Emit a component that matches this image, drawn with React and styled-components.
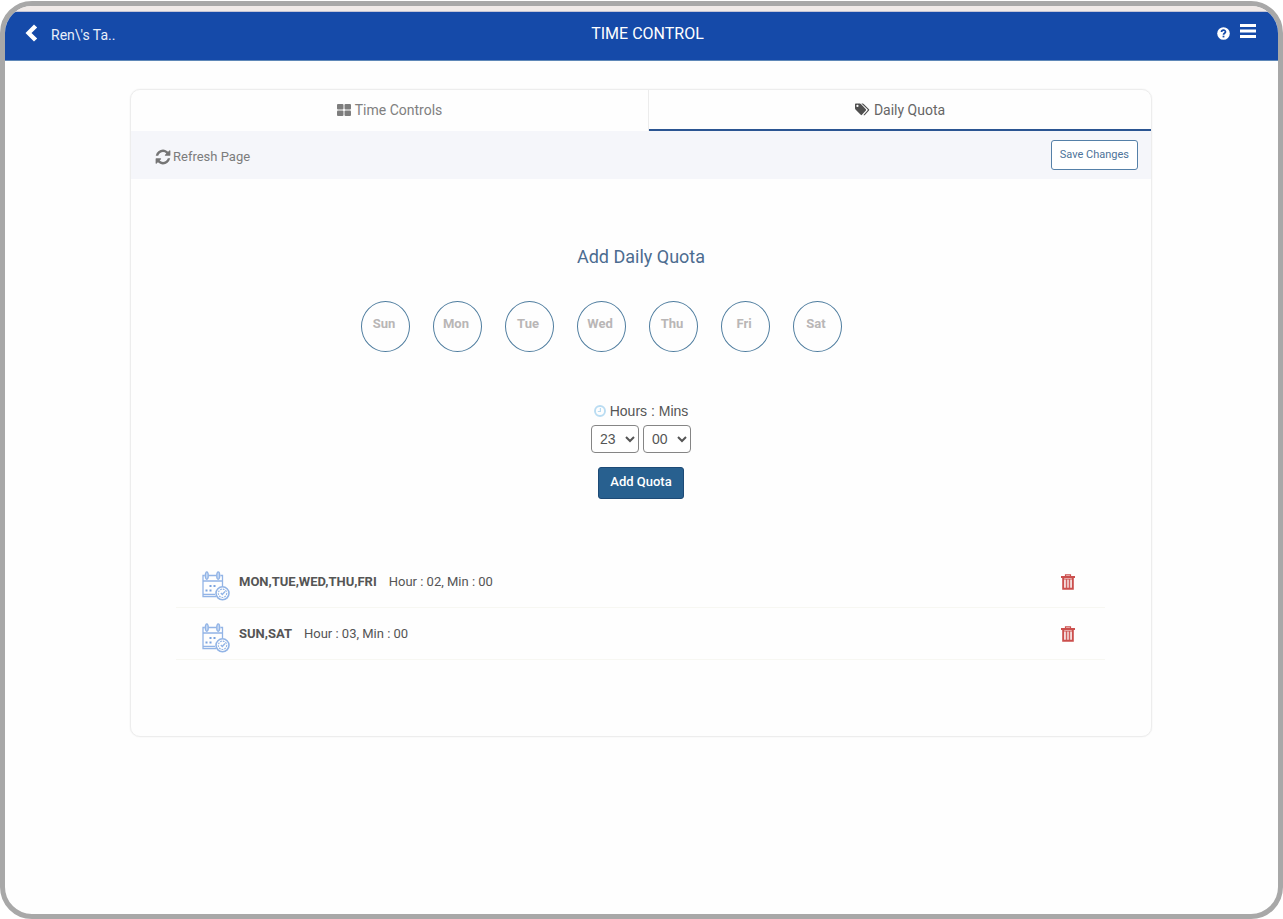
import styled, { createGlobalStyle } from "styled-components";

const days = ["Sun", "Mon", "Tue", "Wed", "Thu", "Fri", "Sat"];

const quotas = [
  { days: "MON,TUE,WED,THU,FRI", hour: "02", min: "00" },
  { days: "SUN,SAT", hour: "03", min: "00" },
];

const pad = (n) => String(n).padStart(2, "0");
const hours = Array.from({ length: 24 }, (_, i) => pad(i));
const minutes = Array.from({ length: 12 }, (_, i) => pad(i * 5));

function BackIcon() {
  return (
    <svg width="13" height="18" viewBox="0 0 13 18" aria-hidden="true">
      <path d="M9 0.500L12.200 3.400L6.500 9L12.200 14.600L9 17.500L0.500 9Z" fill="currentColor" />
    </svg>
  );
}

function HelpIcon() {
  return (
    <svg width="13" height="13" viewBox="0 0 13 13" aria-hidden="true">
      <circle cx="6.500" cy="6.500" r="6.300" fill="#fff" />
      <path
        d="M4.500 5C4.500 2.500 8.600 2.600 8.500 4.900C8.400 6.300 6.500 6.200 6.500 7.800"
        fill="none"
        stroke="#154aa9"
        strokeWidth="1.700"
      />
      <rect x="5.600" y="8.700" width="1.800" height="1.700" fill="#154aa9" />
    </svg>
  );
}

function MenuIcon() {
  return (
    <svg width="16" height="14" viewBox="0 0 16 14" aria-hidden="true">
      <path d="M0 0H16V3H0ZM0 5.500H16V8.500H0ZM0 11H16V14H0Z" fill="currentColor" />
    </svg>
  );
}

function GridIcon() {
  return (
    <svg width="14" height="12" viewBox="0 0 14 12" aria-hidden="true">
      <g fill="#7d7d7d">
        <rect width="6.500" height="5.500" rx="1" />
        <rect x="7.500" width="6.500" height="5.500" rx="1" />
        <rect y="6.500" width="6.500" height="5.500" rx="1" />
        <rect x="7.500" y="6.500" width="6.500" height="5.500" rx="1" />
      </g>
    </svg>
  );
}

function TagsIcon() {
  return (
    <svg width="15" height="13" viewBox="0 0 16 13" aria-hidden="true">
      <path
        d="M0.800 0H5.200Q5.800 0 6.300 0.500L11.600 6.200Q12.200 6.900 11.600 7.500L7.400 12.200Q6.800 12.800 6.100 12.200L0.500 6.400Q0 5.900 0 5.200V0.800Q0 0 0.800 0ZM2.600 1.500A1.200 1.200 0 1 0 2.600 3.900A1.200 1.200 0 1 0 2.600 1.500Z"
        fill="#505050"
        fillRule="evenodd"
      />
      <path
        d="M6.800 0H8.200Q8.800 0 9.300 0.500L14.900 6.300Q15.500 6.900 14.900 7.500L10.300 12.500Q9.600 13 9 12.300L13.300 7.500Q13.900 6.900 13.300 6.300Z"
        fill="#505050"
      />
    </svg>
  );
}

function RefreshIcon() {
  return (
    <svg width="16" height="16" viewBox="64 64 1664 1664" aria-hidden="true">
      <path
        d="M1639 1056q0 5-1 7-64 268-268 434.500t-478 166.500q-146 0-282.500-55t-243.500-157l-129 129q-19 19-45 19t-45-19-19-45v-448q0-26 19-45t45-19h448q26 0 45 19t19 45-19 45l-137 137q71 66 161 102t187 36q134 0 250-65t186-179q11-17 53-117 8-23 30-23h192q13 0 22.500 9.500t9.500 22.500zm25-800v448q0 26-19 45t-45 19h-448q-26 0-45-19t-19-45 19-45l138-138q-148-137-349-137-134 0-250 65t-186 179q-11 17-53 117-8 23-30 23h-199q-13 0-22.500-9.500t-9.500-22.500v-7q65-268 270-434.500t480-166.500q146 0 284 55.500t245 156.500l130-129q19-19 45-19t45 19 19 45z"
        fill="#757575"
      />
    </svg>
  );
}

function ClockIcon() {
  return (
    <svg width="12" height="12" viewBox="0 0 12 12" aria-hidden="true">
      <circle cx="6" cy="6" r="5" fill="none" stroke="#b9dcf2" strokeWidth="1.900" />
      <path d="M6.400 3V6.500H3.800" fill="none" stroke="#b9dcf2" strokeWidth="1.200" />
    </svg>
  );
}

function CalendarIcon() {
  return (
    <svg width="28" height="30" viewBox="0 0 28 30" aria-hidden="true">
      <g fill="none" stroke="#92b4e6" strokeWidth="1.300">
        <path d="M2.800 4.500H1V25.500H14M6.800 4.500H14.200M18.400 4.500H20.500V15M1 10H20.500M1 23.300H13" />
        <ellipse cx="4.800" cy="4.600" rx="1.500" ry="3.700" fill="#c5d8f3" />
        <ellipse cx="16.200" cy="4.600" rx="1.500" ry="3.700" fill="#c5d8f3" />
        <circle cx="20.500" cy="22.300" r="6.500" fill="#fdfdfd" strokeWidth="1.600" />
        <circle cx="20.500" cy="22.300" r="4.200" strokeDasharray="1.800 1" strokeWidth="1.100" />
        <path d="M18.800 22L20.300 23.500L23 20.500" />
      </g>
      <path
        d="M7.500 14H9.500V16H7.500ZM11.500 14H13.500V16H11.500ZM3.500 18.500H5.500V20.500H3.500ZM7.500 18.500H9.500V20.500H7.500Z"
        fill="#7ba3df"
      />
    </svg>
  );
}

function TrashIcon() {
  return (
    <svg width="14" height="16" viewBox="0 0 14 16" aria-hidden="true">
      <g fill="none" stroke="#cb4f4d">
        <path d="M4.500 2.500V0.900H9.500V2.500" strokeWidth="1.200" />
        <path d="M0 3H14" strokeWidth="1.800" />
        <path d="M2.200 4V14.800H11.800V4" strokeWidth="2" />
        <path d="M5.300 5V14M8.700 5V14" strokeWidth="1.200" />
        <path d="M7 5V14" strokeWidth="0.700" />
        <path d="M2 5H12" strokeWidth="1" />
      </g>
    </svg>
  );
}

function App() {
  return (
    <>
      <GlobalStyle />
      <Frame>
        <TopStrip />
        <Header>
          <BackLink href="#back">
            <BackIcon />
            <span>Ren\'s Ta..</span>
          </BackLink>
          <PageTitle>TIME CONTROL</PageTitle>
          <HeaderActions>
            <IconButton type="button" aria-label="Help">
              <HelpIcon />
            </IconButton>
            <IconButton type="button" aria-label="Menu" $raised>
              <MenuIcon />
            </IconButton>
          </HeaderActions>
        </Header>

        <Main>
          <Card>
            <Tabs role="tablist">
              <Tab type="button" role="tab" aria-selected="false">
                <GridIcon />
                Time Controls
              </Tab>
              <Tab type="button" role="tab" aria-selected="true" $active>
                <TagsIcon />
                Daily Quota
              </Tab>
            </Tabs>

            <Toolbar>
              <RefreshButton type="button">
                <RefreshIcon />
                Refresh Page
              </RefreshButton>
              <SaveButton type="button">Save Changes</SaveButton>
            </Toolbar>

            <QuotaForm onSubmit={(e) => e.preventDefault()}>
              <FormTitle>Add Daily Quota</FormTitle>
              <DayList>
                {days.map((day) => (
                  <DayButton type="button" key={day}>
                    {day}
                  </DayButton>
                ))}
              </DayList>
              <TimeLabel>
                <ClockIcon />
                <span>
                  <label htmlFor="hours">Hours</label> : <label htmlFor="mins">Mins</label>
                </span>
              </TimeLabel>
              <TimeFields>
                <TimeSelect id="hours" defaultValue="23">
                  {hours.map((h) => (
                    <option key={h}>{h}</option>
                  ))}
                </TimeSelect>
                <TimeSelect id="mins" defaultValue="00">
                  {minutes.map((m) => (
                    <option key={m}>{m}</option>
                  ))}
                </TimeSelect>
              </TimeFields>
              <AddButton type="submit">Add Quota</AddButton>
            </QuotaForm>

            <QuotaList>
              {quotas.map((quota) => (
                <QuotaRow key={quota.days}>
                  <CalendarIcon />
                  <QuotaText>
                    <strong>{quota.days}</strong>
                    <span>
                      Hour : {quota.hour}, Min : {quota.min}
                    </span>
                  </QuotaText>
                  <IconButton type="button" aria-label={`Delete ${quota.days}`}>
                    <TrashIcon />
                  </IconButton>
                </QuotaRow>
              ))}
            </QuotaList>
          </Card>
        </Main>
      </Frame>
    </>
  );
}

export default App;

const GlobalStyle = createGlobalStyle`
  * {
    box-sizing: border-box;
  }
  body {
    margin: 0;
    background: #fff;
    font-family: Roboto, "Liberation Sans", sans-serif;
    color: #555;
  }
  button {
    font-family: inherit;
    cursor: pointer;
  }
  svg {
    display: block;
    flex-shrink: 0;
  }
`;

const Frame = styled.div`
  min-height: calc(100vh - 1px);
  margin-top: 1px;
  border: 5px solid #a8a8a8;
  border-radius: 32px;
  background: #fefefe;
  overflow: hidden;
`;

const TopStrip = styled.div`
  height: 6px;
  background: #f0eae8;
  border-bottom: 1px solid #c3c3d6;
`;

const Header = styled.header`
  display: grid;
  grid-template-columns: 1fr auto 1fr;
  align-items: center;
  height: 49px;
  padding: 0 22px 6px 20px;
  background: #154aa9;
  border-bottom: 1px solid #5f88b8;
  color: #fff;
`;

const BackLink = styled.a`
  display: flex;
  align-items: center;
  gap: 13px;
  color: #e9effa;
  font-size: 14px;
  line-height: 20px;
  text-decoration: none;

  span {
    padding-top: 4px;
  }
  svg {
    color: #fff;
  }
`;

const PageTitle = styled.h1`
  margin: 0;
  padding: 2px 0 0 14px;
  font-size: 16px;
  line-height: 20px;
  font-weight: 400;
`;

const HeaderActions = styled.div`
  display: flex;
  justify-content: flex-end;
  align-items: center;
  gap: 10px;
`;

const IconButton = styled.button`
  padding: 0 0 ${(props) => (props.$raised ? "4px" : "0")};
  border: 0;
  background: none;
  color: inherit;
`;

const Main = styled.main`
  padding: 28px 126px 28px 125px;
`;

const Card = styled.section`
  border: 1px solid #ededed;
  border-radius: 10px;
  background: #fefefe;
  box-shadow: 0 0 2px #f0f0f0;
  overflow: hidden;
`;

const Tabs = styled.div`
  display: grid;
  grid-template-columns: 518fr 502fr;
  height: 41px;
`;

const Tab = styled.button`
  display: flex;
  align-items: center;
  justify-content: center;
  gap: 4px;
  padding: 0 0 ${(props) => (props.$active ? "0" : "2px")};
  border: 0;
  border-right: ${(props) => (props.$active ? "0" : "1px solid #ececec")};
  border-bottom: ${(props) => (props.$active ? "2px solid #2b5592" : "0")};
  background: none;
  color: ${(props) => (props.$active ? "#666" : "#808080")};
  font-size: 14px;
  line-height: 20px;
`;

const Toolbar = styled.div`
  display: flex;
  align-items: center;
  justify-content: space-between;
  height: 48px;
  padding: 0 13px 0 24px;
  background: #f5f6fa;
`;

const RefreshButton = styled.button`
  display: flex;
  align-items: center;
  gap: 2px;
  padding: 4px 0 0;
  border: 0;
  background: none;
  color: #7c7c7c;
  font-size: 13px;
  line-height: 20px;
`;

const SaveButton = styled.button`
  height: 30px;
  padding: 0 8px 2px;
  border: 1px solid #5580a8;
  border-radius: 3px;
  background: #fff;
  color: #4d7399;
  font-size: 11px;
`;

const QuotaForm = styled.form`
  display: flex;
  flex-direction: column;
  align-items: center;
  padding-top: 66px;
`;

const FormTitle = styled.h2`
  margin: 0 0 32px;
  color: #4c6c90;
  font-size: 18px;
  line-height: 24px;
  font-weight: 400;
`;

const DayList = styled.div`
  display: flex;
  gap: 23px;
  margin-bottom: 49px;
  padding-right: 80px;
`;

const DayButton = styled.button`
  width: 49px;
  height: 51px;
  padding: 0 2px 6px 0;
  border: 1px solid #4f7d9f;
  border-radius: 50%;
  background: none;
  color: #b9b6b6;
  font-size: 13px;
  font-weight: 700;
`;

const TimeLabel = styled.div`
  display: flex;
  align-items: center;
  gap: 4px;
  margin-bottom: 4px;
  font-family: "Liberation Sans", Arial, sans-serif;
  font-size: 14px;
  line-height: 20px;
`;

const TimeFields = styled.div`
  display: flex;
  gap: 4px;
  margin-bottom: 14px;
`;

const TimeSelect = styled.select`
  width: 48px;
  height: 28px;
  padding: 0 0 0 4px;
  border: 1px solid #858585;
  border-radius: 4px;
  background: #fff;
  color: #555;
  font-family: "Liberation Sans", Arial, sans-serif;
  font-size: 14px;
`;

const AddButton = styled.button`
  height: 32px;
  padding: 0 11px 4px;
  border: 1px solid #1d4a76;
  border-radius: 3px;
  background: #28608f;
  color: #fff;
  font-size: 13px;
  font-weight: 500;
`;

const QuotaList = styled.ul`
  margin: 0;
  padding: 57px 46px 76px 45px;
  list-style: none;
`;

const QuotaRow = styled.li`
  display: flex;
  align-items: center;
  height: 52px;
  padding: 0 30px 0 26px;
  border-bottom: 1px solid #f7f7f2;

  svg {
    margin-top: 9px;
  }
  button svg {
    margin-top: 0;
  }
`;

const QuotaText = styled.div`
  display: flex;
  flex: 1;
  gap: 12px;
  padding-left: 9px;
  font-size: 13px;
  line-height: 20px;
`;
